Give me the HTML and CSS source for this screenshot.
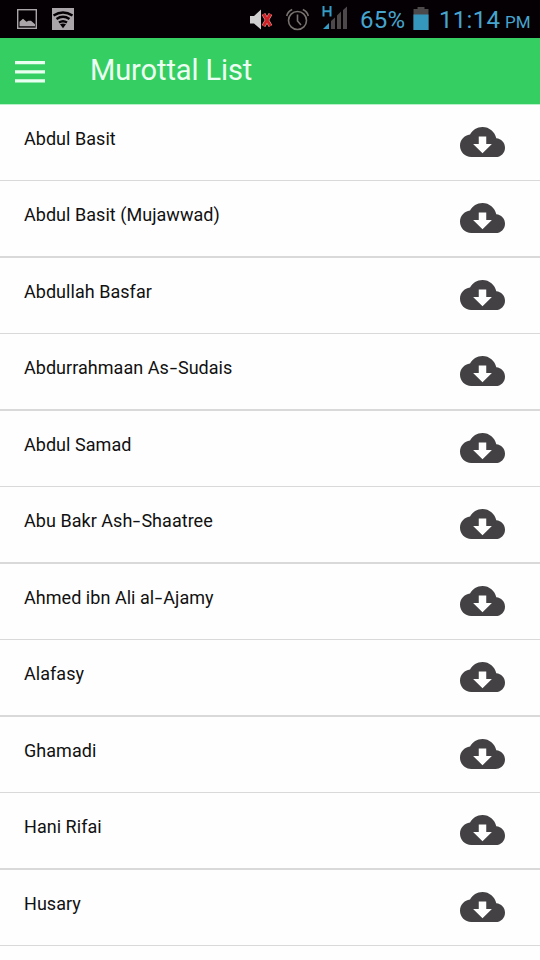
FILE: index.html
```html
<!DOCTYPE html>
<html lang="en">
<head>
<meta charset="utf-8">
<title>Murottal List</title>
<link rel="stylesheet" href="styles.css">
</head>
<body>
<svg width="0" height="0" class="defs"><symbol id="cloud" viewBox="0 4 24 16"><path d="M19.35 10.04C18.67 6.59 15.64 4 12 4 9.11 4 6.6 5.64 5.35 8.04 2.34 8.36 0 10.91 0 14c0 3.31 2.69 6 6 6h13c2.76 0 5-2.24 5-5 0-2.64-2.05-4.78-4.65-4.96zM17 13l-5 5-5-5h3V9h4v4h3z"/></symbol></svg>
<div class="status">
<svg class="left-icons" width="60" height="24" viewBox="16 8 60 24"><rect x="17.700" y="9.700" width="18.600" height="18.600" fill="none" stroke="#aaa5a8" stroke-width="1.400"/><path d="M19.500 26.300v-4.500l3.500-3 3.500 3 2-1 2.500 0 4 3.500v2z" fill="#aaa5a8"/><rect x="52" y="8" width="22" height="22" fill="#aaa5a8"/><g fill="none" stroke="#050003" stroke-width="2.400"><path d="M53.500 15.500q9.500-6 19 0M56.500 19q6.500-4.500 13 0M59 22.500q4-2.600 8 0"/></g><path d="M60 24.200q3-1.600 6 0l-3 4z" fill="#050003"/></svg>
<svg class="right-icons" width="100" height="32" viewBox="249 4 100 32"><path d="M250 16h4l7-6.500v20l-7-6h-4z" fill="#d0cfcf"/><path d="M263.500 14l7 12M270.500 14l-7 12" stroke="#d9a0a0" stroke-width="4"/><path d="M263.500 14l7 12M270.500 14l-7 12" stroke="#cf2025" stroke-width="2.800"/><g fill="none" stroke="#77716f" stroke-width="1.600"><circle cx="297.500" cy="20.500" r="9"/><path d="M297.500 14.500v6.500l3.500 4M286.700 16q1-4.500 5.500-6.500M308.300 16q-1-4.500-5.500-6.500"/></g><path d="M323.500 6v10.500M330.500 6v10.500M323.500 11.300h7" fill="none" stroke="#359bc7" stroke-width="2"/><path d="M323 29l6-6v6z" fill="#359bc7"/><path d="M331 21l4-3.500V29h-4zM337 15.500l4-4V29h-4zM343 10l4-3.500V29h-4z" fill="#4d484a"/></svg>
<span class="percent">65%</span>
<svg class="battery" width="16" height="24" viewBox="413 6 16 24"><path d="M417.500 7h7v2h4v21h-15V9h4z" fill="#4c494b"/><path d="M413.500 14.500h15V30h-15z" fill="#3697bd"/></svg>
<span class="time">11:14</span><span class="pm">PM</span>
</div>
<header class="bar">
<svg width="30" height="22" viewBox="0 0 30 22"><path d="M0 0h30v3.300H0zM0 9.200h30v3.300H0zM0 18.200h30v3.300H0z" fill="#e9fff0"/></svg>
<h1>Murottal List</h1>
</header>
<ul class="list">
<li><span>Abdul Basit</span><svg class="cloud"><use href="#cloud"/></svg></li>
<li><span>Abdul Basit (Mujawwad)</span><svg class="cloud"><use href="#cloud"/></svg></li>
<li><span>Abdullah Basfar</span><svg class="cloud"><use href="#cloud"/></svg></li>
<li><span>Abdurrahmaan As<b>-</b>Sudais</span><svg class="cloud"><use href="#cloud"/></svg></li>
<li><span>Abdul Samad</span><svg class="cloud"><use href="#cloud"/></svg></li>
<li><span>Abu Bakr Ash<b>-</b>Shaatree</span><svg class="cloud"><use href="#cloud"/></svg></li>
<li><span>Ahmed ibn Ali al<b>-</b>Ajamy</span><svg class="cloud"><use href="#cloud"/></svg></li>
<li><span>Alafasy</span><svg class="cloud"><use href="#cloud"/></svg></li>
<li><span>Ghamadi</span><svg class="cloud"><use href="#cloud"/></svg></li>
<li><span>Hani Rifai</span><svg class="cloud"><use href="#cloud"/></svg></li>
<li><span>Husary</span><svg class="cloud"><use href="#cloud"/></svg></li>
</ul>
</body>
</html>
```
FILE: styles.css
```css
* { box-sizing: border-box; }
body { margin: 0; height: 960px; overflow: hidden; background: #fefefe; font-family: Roboto, "Liberation Sans", sans-serif; }
svg { display: block; flex: none; }
.defs { position: absolute; }
.status { height: 38px; background: #050003; display: flex; align-items: flex-start; color: #45a5cf; white-space: nowrap; }
.status span { flex: none; }
.left-icons { margin: 8px 0 0 16px; }
.right-icons { margin: 4px 0 0 173px; }
.percent { width: 53px; margin-left: 11px; font-size: 24px; line-height: 40px; letter-spacing: 0.3px; }
.battery { margin-top: 6px; }
.time { width: 66px; margin-left: 10px; font-size: 24px; line-height: 40px; letter-spacing: 0.3px; }
.pm { font-size: 17px; line-height: 44px; }
.bar { height: 67px; background: #35ce62; border-bottom: 1px solid #b9efc9; display: flex; align-items: flex-start; }
.bar svg { margin: 23px 0 0 15px; }
h1 { margin: 14px 0 0 45px; font-size: 29px; line-height: 36px; font-weight: 400; letter-spacing: -0.1px; color: #edfff2; }
.list { margin: 0; padding: 0; list-style: none; }
.list li { height: 76px; display: flex; justify-content: space-between; align-items: flex-start; padding: 22px 35px 0 24px; border-bottom: 1px solid #d9d9d9; }
.list li:nth-child(even) { height: 77px; border-bottom-width: 2px; }
.list span { font-size: 18px; line-height: 24px; letter-spacing: 0.04px; color: #111; }
.list b { display: inline-block; margin: 0 2px; font-weight: 400; transform: scaleX(1.5); }
.cloud { width: 45px; height: 30px; fill: #434143; }
```
